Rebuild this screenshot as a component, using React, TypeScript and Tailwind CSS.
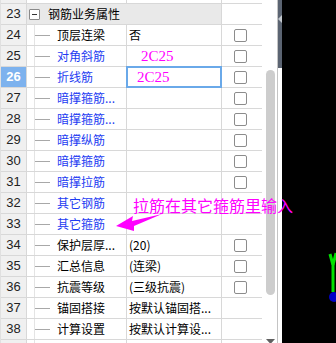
import React from "react";

type Row = {
  n: number;
  name: string;
  blue?: boolean;
  value?: string;
  magenta?: "a" | "b";
  check?: boolean;
};

const rows: Row[] = [
  { n: 24, name: "顶层连梁", value: "否", check: true },
  { n: 25, name: "对角斜筋", blue: true, value: "2C25", magenta: "a", check: true },
  { n: 26, name: "折线筋", blue: true, value: "2C25", magenta: "b", check: true },
  { n: 27, name: "暗撑箍筋...", blue: true, check: true },
  { n: 28, name: "暗撑箍筋...", blue: true, check: true },
  { n: 29, name: "暗撑纵筋", blue: true, check: true },
  { n: 30, name: "暗撑箍筋", blue: true, check: true },
  { n: 31, name: "暗撑拉筋", blue: true, check: true },
  { n: 32, name: "其它钢筋", blue: true },
  { n: 33, name: "其它箍筋", blue: true },
  { n: 34, name: "保护层厚...", value: "(20)", check: true },
  { n: 35, name: "汇总信息", value: "(连梁)", check: true },
  { n: 36, name: "抗震等级", value: "(三级抗震)", check: true },
  { n: 37, name: "锚固搭接", value: "按默认锚固搭..." },
  { n: 38, name: "计算设置", value: "按默认计算设..." },
];

const cjk = { fontFamily: '"Noto Sans CJK SC", "Noto Sans", sans-serif' };
const num = { fontFamily: '"Liberation Sans", Arial, sans-serif' };

function DataRow({ r }: { r: Row }) {
  const sel = r.n === 26;
  return (
    <div className="flex h-[21px] border-b border-[#d8d8d8]">
      <div
        className={`w-[26px] shrink-0 border-r border-[#d8d8d8] flex items-center justify-center text-[13px] ${
          sel ? "bg-[#7db2ee] text-white font-bold" : "bg-[#f0f0f0] text-[#222]"
        }`}
        style={num}
      >
        {r.n}
      </div>
      <div className="w-[100px] shrink-0 border-r border-[#d8d8d8] flex items-center">
        <div className="w-[7px] shrink-0" />
        <div className="w-px self-stretch bg-[#e4e4e4] shrink-0" />
        <div className="w-[15px] h-px bg-[#a8a8a8] shrink-0" />
        <div className="w-[7px] shrink-0" />
        <span
          className={`text-[12px] leading-none whitespace-nowrap ${r.blue ? "text-[#1d3cf2]" : "text-black"}`}
          style={cjk}
        >
          {r.name}
        </span>
      </div>
      <div className="relative w-[95px] shrink-0 border-r border-[#d8d8d8] flex items-center">
        {sel && (
          <div className="absolute -left-px -top-px -right-px -bottom-px border-2 border-[#6aa9e9]" />
        )}
        {r.magenta ? (
          <span
            className={`text-[15px] leading-none text-[#ff00ff] ${r.magenta === "a" ? "pl-[14px]" : "pl-[10px]"}`}
            style={{ fontFamily: '"Liberation Serif", "Times New Roman", serif' }}
          >
            {r.value}
          </span>
        ) : (
          <span className="pl-[2px] text-[12px] leading-none text-black whitespace-nowrap" style={cjk}>
            {r.value}
          </span>
        )}
      </div>
      <div className="w-[41px] shrink-0 border-r border-[#d8d8d8] flex items-center pl-[12px]">
        {r.check && <div className="w-[13px] h-[13px] border border-[#8c8c8c] rounded-[2px] bg-white" />}
      </div>
    </div>
  );
}

export default function App() {
  return (
    <div className="relative w-[336px] h-[343px] overflow-hidden bg-black flex">
      <div className="w-[262px] shrink-0 bg-white border-l border-[#e0e0e0]">
        {/* partial top row */}
        <div className="flex h-[4px] border-b border-[#d8d8d8]">
          <div className="w-[26px] shrink-0 bg-[#f0f0f0] border-r border-[#d8d8d8]" />
          <div className="w-[100px] shrink-0 border-r border-[#d8d8d8]" />
          <div className="w-[95px] shrink-0 border-r border-[#d8d8d8]" />
          <div className="w-[41px] shrink-0 border-r border-[#d8d8d8]" />
        </div>
        {/* group header */}
        <div className="flex h-[21px] border-b border-[#d8d8d8]">
          <div
            className="w-[26px] shrink-0 bg-[#f0f0f0] border-r border-[#d8d8d8] flex items-center justify-center text-[13px] text-[#222]"
            style={num}
          >
            23
          </div>
          <div className="w-[195px] shrink-0 bg-[#e9e9e9] border-r border-[#d8d8d8] flex items-center">
            <div className="ml-[2px] w-[11px] h-[11px] border border-[#8a8a8a] rounded-[1px] bg-white flex items-center justify-center">
              <div className="w-[5px] h-px bg-[#333]" />
            </div>
            <span className="ml-[8px] text-[12px] leading-none text-black" style={cjk}>
              钢筋业务属性
            </span>
          </div>
          <div className="w-[41px] shrink-0 border-r border-[#d8d8d8]" />
        </div>
        {rows.map((r) => (
          <DataRow key={r.n} r={r} />
        ))}
        {/* partial bottom row */}
        <div className="flex h-[21px] border-b border-[#d8d8d8]">
          <div className="w-[26px] shrink-0 bg-[#f0f0f0] border-r border-[#d8d8d8]" />
          <div className="w-[100px] shrink-0 border-r border-[#d8d8d8] flex">
            <div className="w-[7px] shrink-0" />
            <div className="w-px bg-[#e4e4e4]" />
          </div>
          <div className="w-[95px] shrink-0 border-r border-[#d8d8d8]" />
          <div className="w-[41px] shrink-0 border-r border-[#d8d8d8]" />
        </div>
      </div>

      {/* scrollbar */}
      <div className="relative w-[16px] shrink-0 bg-white border-r border-[#c4c4c4]">
        <div className="absolute left-[4px] top-[70px] w-[9px] h-[225px] rounded-[5px] bg-[#cdcdcd]" />
        <svg className="absolute left-[4px] top-[338px]" width="9" height="6" viewBox="0 0 9 6">
          <polygon points="0,1 9,1 4.5,6" fill="#606060" />
        </svg>
      </div>

      {/* splitter strip */}
      <div className="w-[4px] shrink-0 flex flex-col">
        <div className="relative h-[68px] bg-[#5b6472]">
          <svg className="absolute left-0 top-[15px]" width="4" height="8" viewBox="0 0 4 8">
            <polygon points="4,0 4,8 0,4" fill="#c3c8ce" />
          </svg>
        </div>
        <div className="flex-1 bg-white" />
      </div>

      <div className="flex-1 bg-black" />

      {/* axis gizmo */}
      <svg className="absolute left-[326px] top-[250px]" width="10" height="55" viewBox="0 0 10 55">
        <path d="M4 4 L7 15 L7 42" stroke="#00e000" strokeWidth="3" fill="none" />
        <path d="M10 3 L7 15" stroke="#00e000" strokeWidth="3" fill="none" />
        <circle cx="8" cy="47" r="5" fill="#0000c8" />
      </svg>

      {/* annotation */}
      <div
        className="absolute left-[133px] top-[197px] text-[16px] leading-none text-[#ff00ff] whitespace-nowrap"
        style={cjk}
      >
        拉筋在其它箍筋里输入
      </div>
      <svg className="absolute left-[114px] top-[210px]" width="50" height="24" viewBox="0 0 50 24">
        <polygon points="2,16 19,6 18,11 48,4 20,16 20,21" fill="#ff00ff" />
      </svg>
    </div>
  );
}
